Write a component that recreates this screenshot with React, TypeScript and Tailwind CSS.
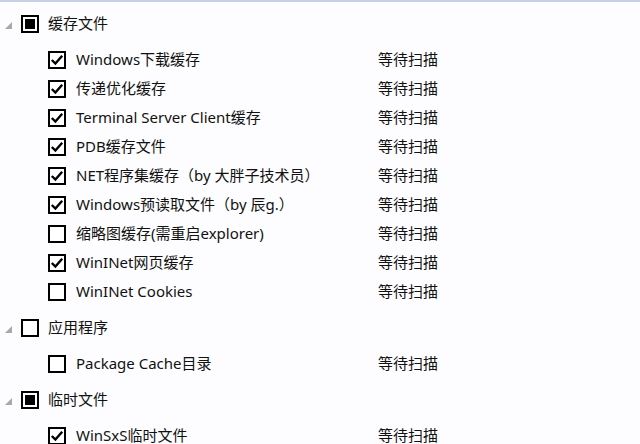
import React from 'react';

type CheckState = 'checked' | 'unchecked' | 'mixed';

interface CleanItem {
  label: string;
  state: CheckState;
}

interface CleanGroup {
  title: string;
  state: CheckState;
  items: CleanItem[];
}

const groups: CleanGroup[] = [
  {
    title: '缓存文件',
    state: 'mixed',
    items: [
      { label: 'Windows下载缓存', state: 'checked' },
      { label: '传递优化缓存', state: 'checked' },
      { label: 'Terminal Server Client缓存', state: 'checked' },
      { label: 'PDB缓存文件', state: 'checked' },
      { label: 'NET程序集缓存（by 大胖子技术员）', state: 'checked' },
      { label: 'Windows预读取文件（by 辰g.）', state: 'checked' },
      { label: '缩略图缓存(需重启explorer)', state: 'unchecked' },
      { label: 'WinINet网页缓存', state: 'checked' },
      { label: 'WinINet Cookies', state: 'unchecked' },
    ],
  },
  {
    title: '应用程序',
    state: 'unchecked',
    items: [{ label: 'Package Cache目录', state: 'unchecked' }],
  },
  {
    title: '临时文件',
    state: 'mixed',
    items: [{ label: 'WinSxS临时文件', state: 'checked' }],
  },
];

function CheckBox({ state, size }: { state: CheckState; size: 'lg' | 'sm' }) {
  const box = size === 'lg' ? 'w-[18px] h-[18px]' : 'w-[18px] h-[18px]';
  return (
    <div className={`${box} shrink-0 border-2 border-black bg-white flex items-center justify-center`}>
      {state === 'mixed' && <div className="w-[10px] h-[10px] bg-black" />}
      {state === 'checked' && (
        <svg width="14" height="14" viewBox="0 0 14 14">
          <path d="M1.8 7 L5.4 10.6 L12.2 2.8" fill="none" stroke="#000" strokeWidth="2.4" />
        </svg>
      )}
    </div>
  );
}

// expanded tree glyph
function Expander() {
  return (
    <svg width="7" height="7" viewBox="0 0 7 7" className="shrink-0">
      <polygon points="7,0 7,7 0,7" fill="#a8a8a8" />
    </svg>
  );
}

export default function App() {
  return (
    <div
      className="w-[640px] h-[444px] overflow-hidden bg-[#fdfdff] border-t-2 border-[#c8d1e3] text-[15px] text-[#111] pt-[4px]"
      style={{ fontFamily: '"Noto Sans", "Noto Sans CJK SC", sans-serif' }}
    >
      {groups.map((group) => (
        <div key={group.title} className="flex flex-col mb-[4px]">
          <div className="h-[35px] flex items-center">
            <div className="w-[21px] pl-[5px] flex items-center pt-[3px]">
              <Expander />
            </div>
            <CheckBox state={group.state} size="lg" />
            <span className="ml-[9px] leading-none">{group.title}</span>
          </div>
          <div className="flex flex-col pt-[4px]">
            {group.items.map((item) => (
              <div key={item.label} className="h-[29px] flex items-center pl-[48px]">
                <CheckBox state={item.state} size="sm" />
                <span className="ml-[10px] w-[302px] whitespace-nowrap leading-none">{item.label}</span>
                <span className="leading-none">等待扫描</span>
              </div>
            ))}
          </div>
        </div>
      ))}
    </div>
  );
}
